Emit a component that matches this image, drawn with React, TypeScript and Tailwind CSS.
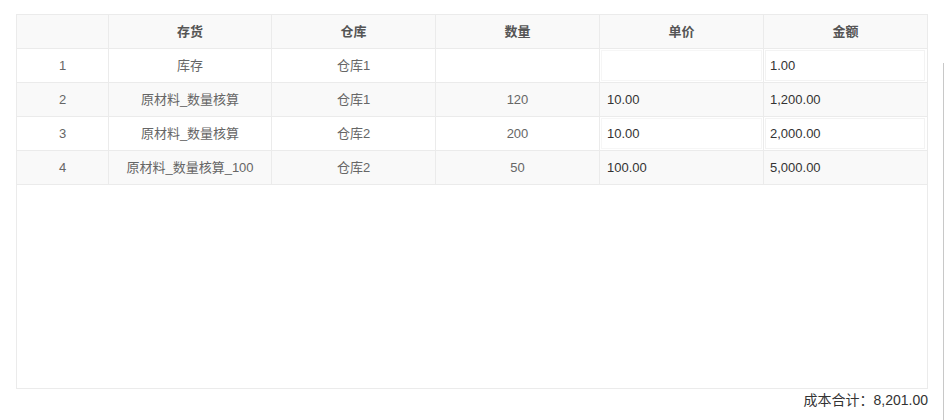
import React from "react";

const font = { fontFamily: '"Liberation Sans", Arial, "Noto Sans CJK SC", sans-serif' };

type Row = { no: string; item: string; wh: string; qty: string; price: string; amt: string };
const rows: Row[] = [
  { no: "1", item: "库存", wh: "仓库1", qty: "", price: "", amt: "1.00" },
  { no: "2", item: "原材料_数量核算", wh: "仓库1", qty: "120", price: "10.00", amt: "1,200.00" },
  { no: "3", item: "原材料_数量核算", wh: "仓库2", qty: "200", price: "10.00", amt: "2,000.00" },
  { no: "4", item: "原材料_数量核算_100", wh: "仓库2", qty: "50", price: "100.00", amt: "5,000.00" },
];

const grid = "grid grid-cols-[92px_163px_164px_164px_164px_163px]";

export default function App() {
  return (
    <div className="relative w-[945px] h-[420px] bg-white" style={font}>
      <div className="pl-[16px] pt-[14px]">
        <div className="w-[912px] h-[375px] border border-[#ebebeb] bg-white">
          <div className={`${grid} h-[34px] bg-[#f9f9f9] border-b border-[#ebebeb] text-[13px] font-bold text-[#555]`}>
            <div className="border-r border-[#ebebeb]" />
            <div className="border-r border-[#ebebeb] flex items-center justify-center">存货</div>
            <div className="border-r border-[#ebebeb] flex items-center justify-center">仓库</div>
            <div className="border-r border-[#ebebeb] flex items-center justify-center">数量</div>
            <div className="border-r border-[#ebebeb] flex items-center justify-center">单价</div>
            <div className="flex items-center justify-center">金额</div>
          </div>
          {rows.map((r, i) => {
            const striped = i % 2 === 1;
            return (
              <div
                key={r.no}
                className={`${grid} h-[34px] border-b border-[#ebebeb] text-[13px] ${striped ? "bg-[#f9f9f9]" : "bg-white"}`}
              >
                <div className="border-r border-[#ebebeb] flex items-center justify-center text-[#666]">{r.no}</div>
                <div className="border-r border-[#ebebeb] flex items-center justify-center text-[#666]">{r.item}</div>
                <div className="border-r border-[#ebebeb] flex items-center justify-center text-[#666]">{r.wh}</div>
                <div className="border-r border-[#ebebeb] flex items-center justify-center text-[#666]">{r.qty}</div>
                <div className="border-r border-[#ebebeb] p-[1px] flex">
                  <div className={`flex-1 flex items-center pl-[5px] text-[#333] border ${striped ? "border-transparent" : "border-[#f6f6f6]"}`}>{r.price}</div>
                </div>
                <div className="p-[1px] pr-[2px] flex">
                  <div className={`flex-1 flex items-center pl-[4px] text-[#333] border ${striped ? "border-transparent" : "border-[#f3f3f3]"}`}>{r.amt}</div>
                </div>
              </div>
            );
          })}
        </div>
        <div className="w-[912px] flex justify-end pt-[1px] text-[14px] leading-[20px] text-[#333]">
          成本合计：8,201.00
        </div>
      </div>
      <div className="absolute left-[943px] top-[63px] w-[1px] h-[357px] bg-[#c8c8c8]" />
    </div>
  );
}
